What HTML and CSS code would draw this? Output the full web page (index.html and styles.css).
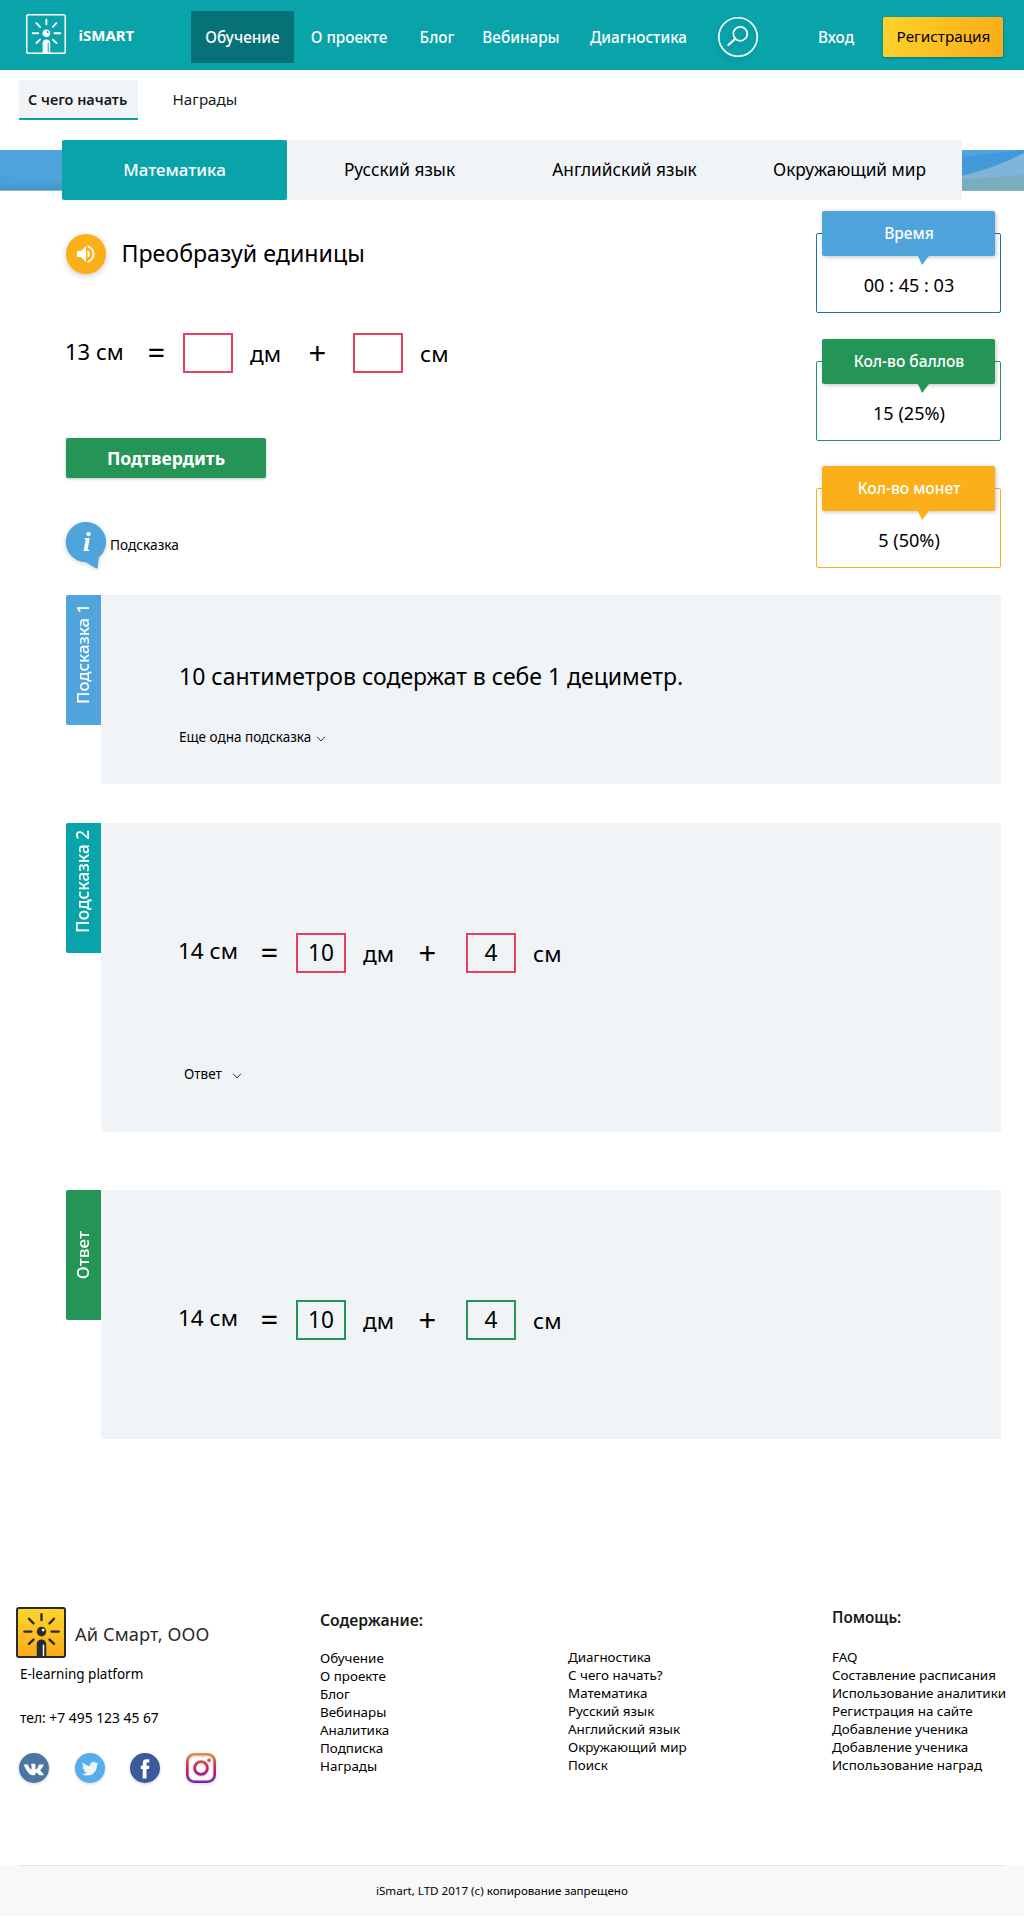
FILE: index.html
```html
<!DOCTYPE html>
<html lang="ru">
<head>
<meta charset="utf-8">
<title>iSMART</title>
<link rel="stylesheet" href="styles.css">
</head>
<body>
<svg class="sprite" aria-hidden="true">
  <symbol id="lamp" viewBox="0 0 40 40">
    <g fill="none" stroke="currentColor" stroke-width="1.9" stroke-linecap="round">
      <path d="M20.4 5.6v4.600M6.700 19.300h5.600M28.400 19.300h5.800M10.400 9.200l3.600 3.700M30.400 9.200l-3.600 3.700M10.400 29l3.600-3.400M30.400 29l-3.600-3.400"/>
    </g>
    <circle cx="20.400" cy="19.300" r="3.800" fill="currentColor"/>
    <path d="M16.600 40V29.200a3.800 3.800 0 0 1 7.600 0V40z" fill="currentColor"/>
  </symbol>
  <symbol id="chevron" viewBox="0 0 9 6"><path d="M.5 .7l4 4.300 4-4.300" fill="none" stroke="#222" stroke-width=".9"/></symbol>
</svg>

<header class="header">
  <a class="brand">
    <svg class="brand-logo" viewBox="0 0 40 40"><rect x=".75" y=".75" width="38.500" height="38.500" rx="1.800" fill="none" stroke="#fff" stroke-width="1.500"/><use href="#lamp"/><circle cx="21.600" cy="18.100" r="1" fill="#09a3aa"/><path d="M22.200 29v9.500" stroke="#09a3aa" stroke-width="1"/></svg>
    <span>iSMART</span>
  </a>
  <nav class="nav">
    <a class="nav-active">Обучение</a>
    <a>О проекте</a>
    <a>Блог</a>
    <a>Вебинары</a>
    <a>Диагностика</a>
    <svg class="search" viewBox="0 0 40 40" fill="none" stroke="#fff"><circle cx="20" cy="20" r="19.200" stroke-width="1.600"/><circle cx="22.300" cy="16.800" r="7" stroke-width="1.700"/><path d="M17.200 21.800L10.400 28" stroke-width="2.300" stroke-linecap="round"/></svg>
    <a class="login">Вход</a>
  </nav>
  <button class="register">Регистрация</button>
</header>

<nav class="subnav">
  <a class="sub-active">С чего начать</a>
  <a>Награды</a>
</nav>

<section class="subjects">
  <svg class="band" viewBox="0 0 1024 41" preserveAspectRatio="none">
    <defs>
      <linearGradient id="bl" x1="0" y1="0" x2="0" y2="1"><stop offset=".5" stop-color="#4aa0d8"/><stop offset="1" stop-color="#4595c5"/></linearGradient>
      <linearGradient id="br" x1="0" y1="0" x2="0" y2="1"><stop offset="0" stop-color="#4296de"/><stop offset="1" stop-color="#4d9fd2"/></linearGradient>
    </defs>
    <path fill="#4fa4dc" d="M0 0h1024v41H0z"/>
    <path fill="url(#bl)" d="M0 25q40 6 100 6v10H0z"/>
    <path fill="url(#br)" d="M930 10l94-10v41h-94z"/>
    <path fill="#80b5da" d="M930 32Q985 24 1024 3v38h-94z"/>
    <path fill="#79aebf" d="M930 31l94-6v16h-94z"/>
    <path fill="#8fb5c4" d="M0 40h1024v1H0z"/>
  </svg>
  <div class="tabs">
    <a class="tab-active">Математика</a>
    <a>Русский язык</a>
    <a>Английский язык</a>
    <a>Окружающий мир</a>
  </div>
</section>

<main class="main">
  <section class="task">
    <div class="question">
      <div class="title">
        <svg class="speaker" viewBox="0 0 40 40"><circle cx="20" cy="20" r="20" fill="#fbaf18"/><g fill="#fff" transform="translate(8 8)"><path d="M3 9v6h4l5 5V4L7 9H3zm10.500-.97v7.940a4.500 4.500 0 0 0 0-7.940zM13.500 3.230v2.060a7 7 0 0 1 0 13.420v2.060a9 9 0 0 0 0-17.540z"/></g></svg>
        <h1>Преобразуй единицы</h1>
      </div>
      <div class="equation">
        <span class="first">13 см</span><span class="sign">=</span><span class="box"></span><span class="unit">дм</span><span class="sign plus">+</span><span class="box"></span><span class="unit">см</span>
      </div>
      <button class="confirm">Подтвердить</button>
      <div class="help">
        <svg class="bubble" viewBox="0 0 40 48"><path fill="#4fa4dc" d="M20 0a20 20 0 0 1 12.700 35.500L31.700 45.500q-.3 1.600-1.800.8L19.500 40A20 20 0 1 1 20 0z"/><text x="21" y="29" text-anchor="middle" class="bubble-i">i</text></svg>
        <span>Подсказка</span>
      </div>
    </div>
    <aside class="stats">
      <div class="stat stat-time"><div class="stat-head">Время</div><div class="stat-value">00 : 45 : 03</div></div>
      <div class="stat stat-score"><div class="stat-head">Кол-во баллов</div><div class="stat-value">15 (25%)</div></div>
      <div class="stat stat-coins"><div class="stat-head">Кол-во монет</div><div class="stat-value">5 (50%)</div></div>
    </aside>
  </section>

  <section class="hint hint-one">
    <div class="label"><span>Подсказка 1</span></div>
    <div class="panel">
      <p>10 сантиметров содержат в себе 1 дециметр.</p>
      <a class="more">Еще одна подсказка<svg class="chev"><use href="#chevron"/></svg></a>
    </div>
  </section>

  <section class="hint hint-two">
    <div class="label"><span>Подсказка 2</span></div>
    <div class="panel">
      <div class="equation">
        <span class="first wide">14 см</span><span class="sign">=</span><span class="box">10</span><span class="unit">дм</span><span class="sign plus">+</span><span class="box">4</span><span class="unit">см</span>
      </div>
      <a class="more">Ответ<svg class="chev"><use href="#chevron"/></svg></a>
    </div>
  </section>

  <section class="hint answer">
    <div class="label"><span>Ответ</span></div>
    <div class="panel">
      <div class="equation">
        <span class="first wide">14 см</span><span class="sign">=</span><span class="box">10</span><span class="unit">дм</span><span class="sign plus">+</span><span class="box">4</span><span class="unit">см</span>
      </div>
    </div>
  </section>
</main>

<footer class="footer">
  <div class="company">
    <div class="company-name">
      <svg class="company-logo" viewBox="0 0 40 40" preserveAspectRatio="none">
        <defs><linearGradient id="gold" x1="0" y1="0" x2="0" y2="1"><stop offset="0" stop-color="#fdd62c"/><stop offset="1" stop-color="#fbab19"/></linearGradient></defs>
        <rect x=".8" y=".8" width="38.400" height="38.400" rx="1.500" fill="url(#gold)" stroke="#2b2b2a" stroke-width="1.600"/><use href="#lamp"/><circle cx="21.700" cy="18.100" r="1.100" fill="#fff"/><path d="M22 29.500v9" stroke="#fff" stroke-width="1.200"/>
      </svg>
      <span>Ай Смарт, ООО</span>
    </div>
    <div class="tagline">E-learning platform</div>
    <div class="phone">тел: +7 495 123 45 67</div>
    <div class="social">
      <svg viewBox="0 0 30 30"><circle cx="15" cy="15" r="15" fill="#4c76a1"/><path transform="translate(4.900 6.600) scale(.82)" fill="#fff" d="M13.162 18.994c.609 0 .858-.406.851-.915-.031-1.917.714-2.949 2.059-1.604 1.488 1.488 1.796 2.519 3.603 2.519h3.200c.808 0 1.126-.26 1.126-.668 0-.863-1.421-2.386-2.625-3.504-1.686-1.565-1.765-1.602-.313-3.486 1.801-2.339 4.157-5.336 2.073-5.336h-3.981c-.772 0-.828.435-1.103 1.083-.995 2.347-2.886 5.387-3.604 4.922-.751-.485-.407-2.406-.35-5.261.015-.754.011-1.271-1.141-1.539-.629-.145-1.241-.205-1.809-.205-2.273 0-3.841.953-2.950 1.119 1.571.293 1.420 3.692 1.054 5.160-.638 2.556-3.036-2.024-4.035-4.305-.241-.548-.315-.974-1.175-.974h-3.255c-.492 0-.787.16-.787.516 0 .602 2.960 6.720 5.786 9.770 2.756 2.975 5.480 2.708 7.376 2.708z"/></svg>
      <svg viewBox="0 0 30 30"><circle cx="15" cy="15" r="15" fill="#55acee"/><path transform="translate(6.900 7.300) scale(.7)" fill="#f1f2f2" d="M23.953 4.570a10 10 0 0 1-2.825.775 4.958 4.958 0 0 0 2.163-2.723c-.951.555-2.005.959-3.127 1.184a4.920 4.920 0 0 0-8.384 4.482C7.690 8.095 4.067 6.130 1.640 3.162a4.822 4.822 0 0 0-.666 2.475c0 1.710.87 3.213 2.188 4.096a4.904 4.904 0 0 1-2.228-.616v.06a4.923 4.923 0 0 0 3.946 4.827 4.996 4.996 0 0 1-2.212.085 4.936 4.936 0 0 0 4.604 3.417 9.867 9.867 0 0 1-6.102 2.105c-.39 0-.779-.023-1.170-.067a13.995 13.995 0 0 0 7.557 2.209c9.053 0 13.998-7.496 13.998-13.985 0-.21 0-.42-.015-.63A9.935 9.935 0 0 0 23.953 4.570z"/></svg>
      <svg viewBox="0 0 30 30"><circle cx="15" cy="15" r="15" fill="#3b5a99"/><path fill="#fff" d="M19.200 6.200h-2.700c-2.600 0-3.800 1.400-3.800 3.900v2.700h-1.900v3.300h1.900v9.300h3.800v-9.300h2.500l.4-3.300h-2.900v-2c0-.9.300-1.400 1.400-1.400h1.300z"/></svg>
      <svg viewBox="0 0 30 30"><defs><linearGradient id="insta" gradientUnits="userSpaceOnUse" x1="0" y1="0" x2="0" y2="30"><stop offset="0" stop-color="#e09b3d"/><stop offset=".3" stop-color="#c74c4d"/><stop offset=".6" stop-color="#c21975"/><stop offset="1" stop-color="#7024c4"/></linearGradient></defs><g fill="none" stroke="url(#insta)"><rect x="1.300" y="1.300" width="27.400" height="27.400" rx="7" stroke-width="2.600"/><circle cx="15" cy="15" r="6.400" stroke-width="2.700"/></g><circle cx="23" cy="7.200" r="1.800" fill="#cf5e4a"/></svg>
    </div>
  </div>
  <div class="links">
    <h2>Содержание:</h2>
    <a>Обучение</a><a>О проекте</a><a>Блог</a><a>Вебинары</a><a>Аналитика</a><a>Подписка</a><a>Награды</a>
  </div>
  <div class="links links-more">
    <a>Диагностика</a><a>С чего начать?</a><a>Математика</a><a>Русский язык</a><a>Английский язык</a><a>Окружающий мир</a><a>Поиск</a>
  </div>
  <div class="links links-help">
    <h2>Помощь:</h2>
    <a>FAQ</a><a>Составление расписания</a><a>Использование аналитики</a><a>Регистрация на сайте</a><a>Добавление ученика</a><a>Добавление ученика</a><a>Использование наград</a>
  </div>
</footer>
<div class="copyright">iSmart, LTD 2017 (с) копирование запрещено</div>
</body>
</html>
```
FILE: styles.css
```css
* { box-sizing: border-box; }
body { margin: 0; background: #fff; color: #000; font-family: "Noto Sans", sans-serif; }
h1, h2, p { margin: 0; font-weight: 400; }
button { border: 0; padding: 0; font-family: inherit; }
a { white-space: nowrap; }
svg { display: block; flex: none; overflow: visible; }
.sprite { position: absolute; width: 0; height: 0; }

.header { display: flex; height: 70px; background: #09a3aa; color: #fff; }
.brand { display: flex; width: 191px; padding: 14px 0 0 26px; gap: 12.500px; font-weight: 700; font-size: 15px; line-height: 43px; }
.brand span { height: 43px; }
.brand-logo { width: 40px; height: 40px; }
.nav { display: grid; grid-template-columns: 103px 110px 66px 102px 133px 66px 112px; height: 50px; margin-top: 11px; font-size: 15.300px; font-weight: 500; line-height: 52px; text-align: center; }
.nav-active { background: #067278; }
.search { width: 40px; height: 40px; margin: 6px auto 0; filter: drop-shadow(-2px 3px 2px rgba(0,80,85,.2)); }
.login { padding-left: 18px; }
.register { width: 120px; height: 40px; margin-top: 17px; padding: 0 0 1px 1px; border-radius: 2px; background: linear-gradient(100deg, #fdd22c, #fbac18); box-shadow: 0 1px 3px rgba(0,0,0,.3); color: #000; font-size: 15.300px; line-height: 39px; }

.subnav { display: flex; height: 70px; padding: 10px 0 0 19px; color: #1a1a1a; font-size: 15.200px; line-height: 38px; }
.subnav a { width: 119px; height: 40px; padding-left: 34.500px; }
.subnav .sub-active { padding-left: 9px; background: #f0f4f7; border-bottom: 2px solid #09a3aa; font-size: 14.400px; font-weight: 600; line-height: 39px; }

.subjects { position: relative; height: 60px; padding: 0 62px; }
.band { position: absolute; left: 0; top: 10px; width: 100%; height: 41px; }
.tabs { position: relative; display: grid; grid-template-columns: repeat(4, 225px); height: 60px; border-radius: 2px; background: #f0f4f7; font-size: 17.250px; line-height: 59px; text-align: center; }
.tab-active { border-radius: 2px; background: #09a3aa; color: #fff; font-size: 16.900px; font-weight: 500; }

.main { width: 1001px; padding-left: 66px; }
.task { display: flex; height: 395px; justify-content: space-between; }
.title { display: flex; padding-top: 34px; gap: 15.500px; }
.title h1 { font-size: 23.200px; line-height: 38px; }
.speaker { width: 40px; height: 40px; filter: drop-shadow(0 2px 3px rgba(0,0,0,.2)); }
.question .equation { margin-top: 59px; }
.equation { display: grid; grid-template-columns: 83px 34px 67px 60px 43px 67px 60px; height: 40px; white-space: nowrap; line-height: 40px; font-size: 22.600px; }
.first { margin-left: -1px; font-size: 22px; line-height: 36px; }
.first.wide { font-size: 22.500px; }
.sign { margin-left: -1.500px; font-size: 31px; line-height: 39px; }
.unit { line-height: 42px; }
.box { width: 50px; height: 40px; border: 2px solid #e5405f; text-align: center; line-height: 35px; font-size: 22.700px; }
.confirm { display: block; width: 200px; height: 40px; margin-top: 65px; border-radius: 2px; background: #259557; box-shadow: 0 1px 3px rgba(0,0,0,.25); color: #fff; font-size: 17.600px; font-weight: 700; line-height: 40px; }
.help { display: flex; margin-top: 44px; gap: 4px; font-size: 13.700px; line-height: 46px; }
.bubble { width: 40px; height: 48px; filter: drop-shadow(0 1px 2px rgba(0,0,0,.2)); }
.bubble-i { font: italic 700 28px "Liberation Serif", serif; fill: #fff; }

.stats { display: flex; flex-direction: column; width: 185px; padding-top: 11px; gap: 26px; }
.stat { position: relative; z-index: 0; display: flex; flex-direction: column; align-items: center; height: 102px; color: #1c70ab; text-align: center; }
.stat::before { content: ""; position: absolute; z-index: -1; inset: 22px 0 0; border: 1px solid; border-radius: 2px; }
.stat-score { color: #259557; }
.stat-coins { color: #fbaf18; margin-top: -1px; }
.stat-head { position: relative; width: 173px; height: 45px; border-radius: 2px; background: #4fa4dc; box-shadow: 1px 1px 4px rgba(0,0,0,.25); color: #fff; font-size: 15.500px; font-weight: 500; line-height: 45px; padding-left: 1px; }
.stat-head::after { content: ""; position: absolute; left: 96px; top: 45px; border: solid transparent; border-width: 9px 7px 0 4px; border-top-color: #4fa4dc; }
.stat-score .stat-head { background: #259557; }
.stat-score .stat-head::after { border-top-color: #259557; }
.stat-coins .stat-head { background: #fbaf18; }
.stat-coins .stat-head::after { border-top-color: #fbaf18; }
.stat-value { padding-left: 1px; margin-top: 12px; color: #000; font-size: 18.100px; line-height: 34px; }

.hint { display: flex; }
.label { display: flex; justify-content: center; align-items: center; width: 35px; height: 130px; padding-right: 3px; border-radius: 2px 0 0 2px; background: #4fa4dc; color: #fff; font-size: 16.700px; font-weight: 500; }
.label span { writing-mode: vertical-rl; transform: rotate(180deg); line-height: 35px; white-space: nowrap; padding-top: 13px; }
.panel { width: 900px; padding-left: 78px; border-radius: 2px; background: #f0f4f7; }
.hint-one .panel { height: 189px; padding-top: 61px; }
.panel p { font-size: 23px; line-height: 40px; }
.more { display: flex; align-items: center; gap: 5px; font-size: 13.500px; line-height: 24px; }
.hint-one .more { margin-top: 29px; }
.chev { width: 10px; height: 6px; margin-top: 4px; }
.hint-two { margin-top: 39px; }
.hint-two .label { background: #09a3aa; font-size: 17.200px; }
.hint-two .panel { height: 309px; padding-top: 110px; }
.hint-two .more { margin: 89px 0 0 5px; gap: 10px; }
.answer { margin-top: 58px; }
.answer .label { background: #259557; font-size: 17px; }
.answer .label span { padding-top: 0; }
.answer .panel { height: 249px; padding-top: 110px; }
.answer .box { border-color: #259557; }
.panel .equation { grid-template-columns: 83px 34px 67px 57px 46px 67px 60px; }

.footer { display: grid; grid-template-columns: 304px 248px 264px 192px; height: 426px; padding: 168px 0 0 16px; }
.company-name { display: flex; gap: 9px; color: #2b2b2a; font-size: 18.200px; line-height: 54px; height: 51px; }
.company-name span { letter-spacing: .1px; }
.company-logo { width: 50px; height: 51px; }
.tagline { margin: 4px 0 0 4px; font-size: 13.500px; line-height: 24px; }
.phone { margin: 20px 0 0 4px; font-size: 13.850px; line-height: 24px; }
.social { display: flex; gap: 25.700px; margin: 23px 0 0 3px; }
.social svg { width: 30px; height: 30px; filter: drop-shadow(0 1px 1.500px rgba(0,0,0,.2)); }
.links { display: flex; flex-direction: column; font-size: 13.400px; line-height: 18px; padding-top: 3px; }
.links h2 { height: 39px; color: #1a1a1a; font-size: 15.700px; font-weight: 600; line-height: 21px; }
.links-more { padding-top: 41px; }
.links-help { padding-top: 0; }
.links-help h2 { height: 41px; font-size: 15.200px; }
.copyright { height: 51px; background: linear-gradient(#e3e3e3, #e3e3e3) 20px 0 / 983px 1px no-repeat, #f8f8f8; font-size: 11.600px; line-height: 51px; padding-left: 376px; }
```
